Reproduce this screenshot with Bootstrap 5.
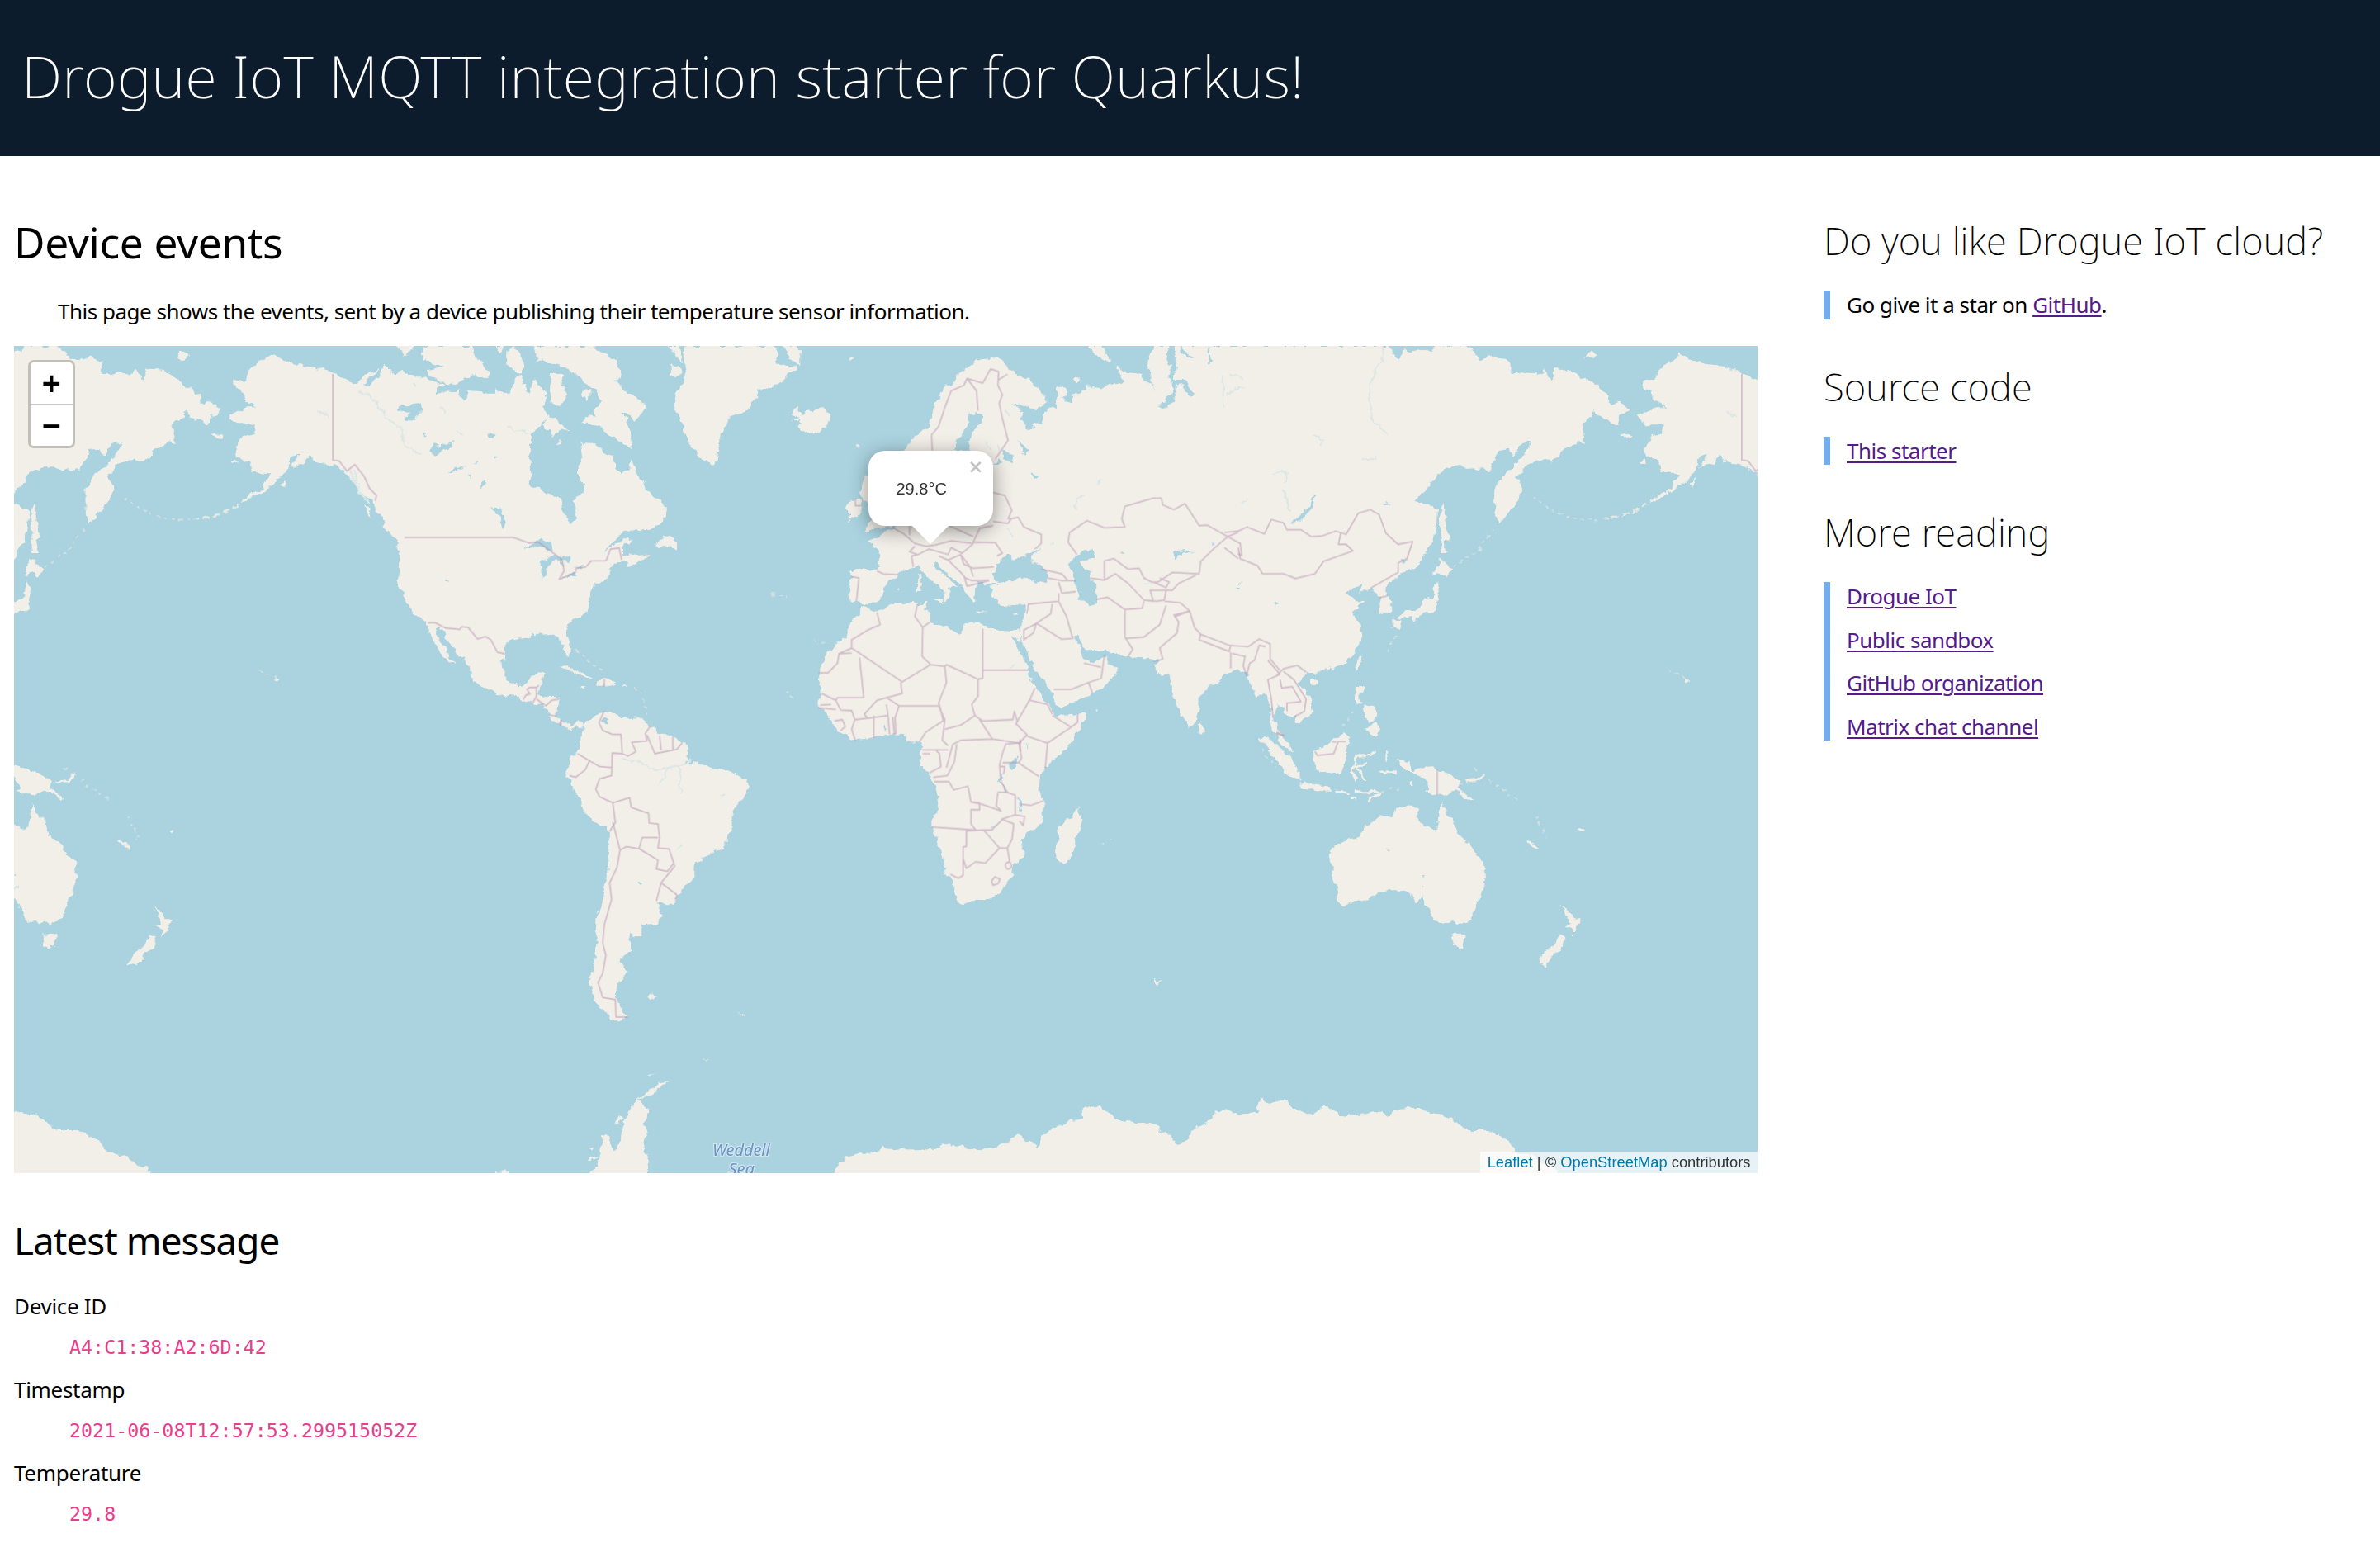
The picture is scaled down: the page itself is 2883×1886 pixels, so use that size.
<!DOCTYPE html>
<html lang="en">
<head>
<meta charset="utf-8">
<title>Drogue IoT MQTT integration starter for Quarkus!</title>
<link href="https://cdn.jsdelivr.net/npm/bootstrap@5.3.0/dist/css/bootstrap.min.css" rel="stylesheet">
<script src="https://cdn.jsdelivr.net/npm/bootstrap@5.3.0/dist/js/bootstrap.bundle.min.js"></script>
<style>
body{font:400 26px/36px "Noto Sans",sans-serif;letter-spacing:-.49px;color:#000;background:#fff;overflow-x:hidden}
.top-band{background:#0d1c2c;height:189px;padding:0 26px}
.top-band h1{font-size:70px;line-height:185px;font-weight:200;letter-spacing:.3px;color:#fff;margin:0}
.page-main{padding-left:17px;gap:80px}
.col-events{width:2112px;flex:none}
.col-events h2{font-size:51.4px;line-height:60px;font-weight:400;letter-spacing:-.35px;margin:74px 0 36px}
.intro{padding-left:53px;margin:0 0 24px}
.col-events h3{font-size:45.8px;line-height:54px;font-weight:400;letter-spacing:-.95px;margin:54px 0 35px}
.facts dt{font-weight:400;letter-spacing:-.3px;margin:0 0 13.5px}
.facts dd{margin:0 0 15.5px 67px;font:23.33px/36px "DejaVu Sans Mono",monospace;letter-spacing:0;color:#e83e8c}
.side-col{padding-top:74px}
.side-col h3{font-size:45.5px;line-height:56px;font-weight:200;letter-spacing:.08px;margin:0 0 33px}
.side-col ul{border-left:8px solid #73adf0;padding-left:20px;line-height:35px;gap:18px;margin:0 0 53px}
.side-col li{height:35px;margin-bottom:-.5px}
.side-col a{color:#551a8b;text-underline-offset:3px;text-decoration-thickness:1.5px}
.world{height:1002px;background:#aad3df;overflow:hidden}
.land{fill:#f2efe9}
.land .isl{stroke:#f2efe9;stroke-width:3;fill:none;stroke-linecap:round}
.land .dots{stroke:#cfe0e2;stroke-width:2;stroke-dasharray:4 5;fill:none}
.land .arc{stroke:#e3e8e3;stroke-width:2.5;stroke-dasharray:9 4;fill:none}
.lakes{fill:#aad3df}
.lakes .riv{fill:none;stroke:#dce7e6;stroke-width:2}
.bord path{fill:none;stroke:#b48dac;stroke-opacity:.5;stroke-width:1.8;stroke-linejoin:round}
.world path{vector-effect:non-scaling-stroke}
.sea-name{font:italic 20px "Noto Sans",sans-serif;fill:#6a93c6;stroke:#d3e6ee;stroke-width:2.5px;paint-order:stroke;letter-spacing:-.1px}
.zoomer{left:17px;top:17px;width:56.6px;border:3.3px solid rgba(0,0,0,.2);border-radius:7px;background-clip:padding-box;background-color:#fff}
.zoomer span{height:50px;font:700 36.67px/52px "DejaVu Sans Mono",monospace;letter-spacing:0;text-align:center;color:#000}
.zoomer span:first-child{border-bottom:1.4px solid #ccc;height:51px}
.bubble{left:1035px;top:127px;width:151px;height:91px;background:#fff;border-radius:20px;box-shadow:0 5px 23px rgba(0,0,0,.4);font:20px/24px "Liberation Sans",sans-serif;letter-spacing:0;color:#333;padding:34px 0 0 33.5px}
.bubble svg{left:52px;top:90px}
.bubble .shut{right:11.5px;top:5px;font:700 23px/28px "DejaVu Sans",sans-serif;color:#c3c3c3}
.credit{right:0;bottom:0;height:26px;background:rgba(255,255,255,.7);font:18.33px/26px "Liberation Sans",sans-serif;letter-spacing:0;color:#333;padding:0 8.5px}
.credit a{color:#0078a8;text-decoration:none}
</style>
</head>
<body>
<header class="top-band"><h1>Drogue IoT MQTT integration starter for Quarkus!</h1></header>
<div class="page-main d-flex align-items-start">
<main class="col-events">
<h2>Device events</h2>
<p class="intro">This page shows the events, sent by a device publishing their temperature sensor information.</p>
<div class="world position-relative">
<svg class="d-block" width="2112" height="1002" viewBox="17 419 2112 1002">
<defs>
<filter id="coast" filterUnits="userSpaceOnUse" x="0" y="400" width="2140" height="1030" color-interpolation-filters="sRGB"><feTurbulence type="fractalNoise" baseFrequency=".1" numOctaves="3" seed="4"/><feDisplacementMap in="SourceGraphic" scale="9" xChannelSelector="R" yChannelSelector="G"/></filter>
<g id="earth">
<g class="land">
<g transform="translate(0 410) scale(.4592 .33333)">
<path d="M717 60L735 72 762 82 795 100 830 105 860 118 880 128 905 140 935 163 960 140 985 120 1000 108 985 135 965 150 958 175 975 165 1000 140 1015 95 1040 130 1060 120 1090 128 1120 145 1150 160 1185 170 1150 180 1150 198 1185 200 1210 190 1220 225 1235 195 1280 200 1310 200 1400 200 1400 1085 1370 1085 1345 1100 1330 1125 1330 1145 1325 1180 1328 1215 1340 1245 1360 1262 1392 1255 1400 1225 1420 1213 1437 1218 1430 1245 1422 1265 1420 1298 1445 1300 1475 1305 1470 1335 1465 1370 1480 1390 1510 1400 1525 1390 1540 1405 1530 1420 1520 1405 1510 1412 1505 1425 1480 1405 1452 1385 1445 1355 1430 1335 1395 1322 1380 1312 1355 1292 1335 1300 1290 1278 1250 1248 1245 1210 1205 1140 1185 1100 1165 1055 1150 1050 1150 1075 1165 1110 1185 1150 1203 1190 1180 1165 1150 1120 1130 1060 1125 1030 1090 1000 1070 940 1052 895 1050 850 1055 780 1045 740 1010 685 1015 670 990 620 985 590 945 560 940 530 915 490 880 462 835 450 820 425 805 450 780 465 765 470 790 420 770 430 755 480 740 505 700 550 660 578 638 598 645 580 690 545 715 490 665 485 660 450 625 430 622 400 640 355 670 345 675 310 620 310 603 280 650 250 680 250 645 225 640 195 615 175 620 158 648 150 655 120 690 80z"/>
<path d="M1045 27L1090 27 1088 45 1065 65zM1120 27L1110 60 1115 75 1145 90 1175 100 1125 115 1130 130 1165 160 1200 165 1230 145 1265 135 1290 145 1290 120 1260 75 1250 27zM1308 27L1330 27 1318 52zM1350 30L1365 50 1385 110 1370 130 1345 100zM1410 27L1460 27 1520 110 1450 90 1415 65zM735 530L760 510 750 540zM960 605L972 615 980 655 968 635zM610 448l12-5 8 10-10 6zM560 343l20 5 12 12-10 3-20-12zM725 1232l10 10-8 10z"/>
<path class="arc" d="M630 600Q590 645 520 655"/>
<path class="dots" d="M520 655Q420 675 330 580M685 1205L725 1230"/>
</g>
<g transform="translate(600 410) scale(.38265 .33333)">
<path d="M0 180L20 200 50 195 60 150 80 130 100 190 112 200 125 145 140 170 160 215 155 250 165 280 145 320 110 345 100 370 70 400 58 460 65 485 80 500 90 535 130 540 160 565 210 580 215 630 240 673 255 650 245 590 280 560 285 530 260 490 265 460 275 430 268 380 320 385 345 420 370 430 375 470 400 495 420 480 432 440 445 480 470 525 475 550 520 590 540 610 540 655 490 695 410 698 370 740 350 775 380 745 420 722 435 730 400 755 400 785 430 790 490 780 470 800 420 832 415 810 400 808 360 840 360 870 315 895 295 940 295 990 250 1020 225 1055 225 1080 240 1130 235 1155 215 1130 205 1085 180 1073 120 1078 110 1090 60 1085 30 1110 22 1150 0 1150z"/>
<path d="M118 27L310 27 345 50 375 80 400 110 400 145 375 150 395 175 430 200 472 240 465 265 445 300 400 265 420 310 435 350 430 400 390 375 350 340 330 315 270 305 285 285 320 290 310 260 330 230 320 190 290 165 260 130 230 115 200 95 175 80 130 80 145 60zM40 50L60 30 80 60 95 95 85 125 60 115 40 95zM175 125L215 130 210 165 225 210 205 245 180 235 170 190zM165 270L190 290 235 340 205 330 180 360 175 330 155 330zM280 180l20 5 2 25-15 12-12-20zM195 380l15-12 8 5-18 15zM540 670L525 730 500 755 550 755 575 775 575 740 550 720 530 710zM188 1200L220 1188 265 1208 310 1237 275 1232 240 1205 205 1195zM325 1240L345 1237 385 1257 350 1265 320 1253zM262 1262l25 2-12 6zM400 1260l20 2-8 6z"/>
<path d="M600 27L880 27 900 60 885 95 930 95 960 100 905 160 845 190 832 180 825 215 790 270 740 285 725 330 710 380 700 440 690 460 645 430 615 380 590 320 570 260 568 200 590 165 605 130 595 60zM910 27L945 27 965 50 965 95 945 90 930 60zM545 27l40 0 5 60-25-35zM555 95l30 10 5 25-15 12-18-15z"/>
<path d="M935 275L960 250 970 275 985 262 1010 265 1035 248 1060 280 1060 305 1030 335 1000 350 965 335 955 315 970 300 935 300 960 290zM1140 580L1162 590 1158 640 1110 665 1125 640 1110 620 1115 600zM1165 490L1185 495 1220 640 1260 655 1260 685 1200 690 1168 700 1185 670 1200 655 1180 600 1155 560zM1143 385l8 0-4 15zM1120 72l15-6-8 12z"/>
<path class="dots" d="M875 930L925 940M1010 1105L1070 1100M920 1280L950 1310M440 1265Q480 1300 475 1370M255 1135L345 1215"/>
</g>
<g transform="translate(980 410) scale(.38265 .33333)">
<path d="M500 105L530 82 590 65 625 95 650 125 700 150 735 190 752 225 745 250 710 262 670 245 645 235 660 255 680 270 670 290 690 325 712 333 705 305 740 310 740 280 765 250 785 262 780 230 790 215 780 170 815 180 820 200 800 220 830 232 835 205 880 175 920 180 980 160 995 155 970 100 1000 125 1040 130 1090 185 1075 150 1085 130 1070 100 1080 50 1090 27 1568 27 1568 1190 1480 1330 1465 1350 1448 1285 1425 1300 1410 1290 1400 1240 1385 1225 1370 1200 1320 1215 1300 1240 1235 1300 1235 1350 1225 1390 1200 1412 1180 1375 1150 1290 1140 1210 1120 1225 1090 1190 1105 1175 1080 1160 1010 1155 950 1145 940 1130 905 1135 870 1120 850 1080 838 1080 838 1095 860 1125 870 1160 885 1175 920 1170 940 1150 945 1170 980 1200 950 1250 895 1290 800 1345 780 1340 775 1300 730 1225 690 1150 670 1090 665 1060 685 1000 687 965 640 975 600 965 580 930 570 890 530 885 525 965 500 930 480 890 430 850 395 795 410 790 395 830 430 865 470 905 445 905 445 945 430 965 435 925 380 870 345 820 310 845 285 845 275 870 240 900 235 930 215 955 175 975 160 955 130 955 125 915 135 870 130 845 150 835 215 840 225 800 215 760 185 740 225 715 260 700 310 640 303 400 330 360 380 320 400 230 440 170z"/>
<path d="M165 975L215 995 270 965 340 960 375 960 365 990 380 1000 385 1030 430 1045 480 1075 490 1040 515 1030 590 1060 640 1065 665 1060 668 1100 645 1080 690 1195 705 1250 740 1300 765 1340 785 1375 800 1372 875 1357 870 1385 830 1450 780 1510 750 1560 355 1560 352 1500 358 1470 310 1462 300 1440 265 1438 205 1452 145 1462 90 1420 60 1370 35 1340 27 1310 40 1270 30 1215 60 1140 115 1085 125 1040 160 1005z"/>
<path d="M878 27L930 27 950 75 945 88 920 75 900 50zM968 95l22 25-15-5zM838 148l10-16 12 10-8 22zM345 855L355 855 350 875 360 890 355 920 345 922zM395 945L430 945 425 965zM272 912l12-5-6 10zM530 988l30 5-20 3zM643 995l18-4-8 8zM1235 1388l20 40-15 14-10-5zM903 1348l12 0-6 4z"/>
</g>
<g transform="translate(1500 410) scale(.4209 .33333)">
<path d="M0 27L430 27 460 80 475 40 490 50 520 40 555 50 560 27 655 27 675 45 695 75 750 65 780 85 785 125 865 130 885 112 905 160 905 110 965 118 1010 155 1065 205 1070 240 1100 230 1125 260 1100 280 1090 320 1060 295 1020 265 1015 290 985 310 1000 380 975 375 940 405 900 450 880 437 830 455 800 500 820 550 800 595 770 640 750 678 737 620 737 550 755 510 820 430 840 378 820 380 790 430 780 400 750 405 725 475 690 480 640 465 590 475 540 550 507 590 545 605 572 625 570 680 560 740 520 820 485 850 470 850 445 880 420 910 440 960 440 990 405 1005 405 945 385 905 350 925 357 892 310 925 330 950 362 955 328 995 350 1040 357 1080 330 1150 300 1185 250 1205 220 1215 195 1215 175 1250 210 1310 213 1360 170 1402 165 1375 145 1375 130 1340 110 1335 105 1365 100 1390 125 1435 150 1480 160 1510 120 1475 110 1430 90 1400 95 1350 75 1285 50 1300 40 1250 20 1215 0 1210z"/>
<path d="M590 600L597 660 607 725 590 740 600 780 583 780 582 700 578 640zM580 800L618 838 600 865 580 850 560 865zM570 880L582 915 565 990 530 1000 510 1020 490 1015 455 1015 480 990 515 990 530 960 560 935zM445 1025L468 1020 460 1060 445 1045zM345 1160L356 1155 347 1205 337 1190zM210 1240l18-6 5 8-14 22-12-8zM340 1260L360 1260 350 1300 355 1330 337 1310zM400 1390L408 1420 395 1445 365 1425zM365 1330l25 10 8 40-25 15-10-30zM995 70L1015 45 1038 60 1020 75zM1105 345l28 12-12 0z"/>
<path class="dots" d="M620 830L690 770 740 680M430 1140L460 1070M300 1410L335 1350"/>
</g>
<g transform="translate(600 850) scale(.38265 .3655)">
<path d="M275 95L290 60 345 30 370 40 400 52 470 55 490 80 525 108 560 112 600 135 615 175 600 205 640 198 690 222 740 228 780 255 797 258 800 300 750 362 748 420 720 490 680 498 632 535 630 575 575 650 560 672 510 662 530 705 510 735 462 740 460 775 428 772 425 820 397 860 417 890 378 950 380 985 420 1045 380 1060 320 1005 298 930 315 860 320 720 345 640 360 500 360 430 290 375 245 280 228 250 235 190 270 150zM478 982l20-12 18 3-25 15zM768 1028l18 8 2 10zM655 1182l25 5-10 1z"/>
<path d="M300 1565L325 1530 330 1490 340 1440 360 1440 375 1485 400 1455 405 1390 450 1320 485 1350 470 1390 478 1440 468 1465 482 1510 485 1580 300 1580zM445 1322L520 1262 548 1256 480 1308zM475 1245l40-22-30 22zM380 1395l10-28 14 8-16 22zM295 1478l14 2-6 10zM290 1520l38-15-30 22zM0 1557L30 1555 50 1567 0 1567z"/>
</g>
<g transform="translate(960 850) scale(.38265 .3655)">
<path d="M400 60L900 60 925 35 925 55 880 145 835 180 805 215 785 240 780 290 795 330 797 385 785 405 750 430 725 455 732 515 698 540 695 575 660 630 625 655 570 660 538 672 520 660 515 625 485 565 470 490 440 420 440 395 465 340 455 290 440 250 405 205 412 150 400 130zM905 348L917 395 900 450 880 520 855 535 837 525 830 485 845 450 838 415 860 395 885 385zM1145 918l10 8 12-4-8 15-14-2zM976 468l10 2-5 5zM1004 457l6 0-3 6z"/>
<path d="M130 1565L145 1530 190 1500 270 1492 285 1465 300 1485 460 1482 475 1462 540 1475 595 1490 650 1475 710 1435 765 1470 775 1480 790 1440 830 1410 915 1380 920 1350 960 1338 1000 1360 1030 1385 1155 1405 1165 1430 1195 1430 1215 1470 1260 1445 1265 1420 1300 1400 1340 1365 1365 1352 1400 1370 1470 1360 1485 1310 1500 1330 1568 1340 1568 1580 130 1580z"/>
</g>
<g transform="translate(1480 850) scale(.4209 .3655)">
<path d="M0 1355L40 1370 100 1360 115 1310 130 1335 170 1325 190 1320 200 1345 260 1370 280 1345 300 1337 350 1375 400 1365 450 1355 485 1378 497 1350 550 1345 650 1375 700 1420 760 1420 825 1455 845 1490 900 1505 925 1530 960 1540 972 1580 0 1580z"/>
<path d="M315 490L345 465 395 450 410 410 430 405 460 373 490 385 500 352 525 345 570 350 555 385 590 415 615 422 628 370 635 330 650 380 665 385 680 440 705 460 725 495 755 530 760 580 745 640 725 690 718 718 680 738 665 725 650 737 610 720 600 685 590 680 580 640 555 672 540 632 510 622 450 632 420 657 385 660 350 677 328 660 335 630 320 570 310 520zM660 770L700 772 695 810 680 820 668 805zM978 668L1000 700 1012 720 1038 720 1025 745 1005 783 1005 755 990 745 1002 735zM970 770L990 778 975 825 955 835 935 877 907 865 930 830 955 810zM1028 422l8-5 8 7-8 8z"/>
<path d="M105 118L130 122 200 185 222 235 222 265 190 245 150 180zM222 268L300 280 318 298 280 295 230 285zM350 100L370 120 355 150 362 180 340 240 280 230 262 190 262 165 290 155 320 130zM505 195L540 200 545 235 560 228 582 210 620 225 655 240 690 268 680 285 725 325 700 320 675 290 640 308 620 308 585 295 600 285 580 250 550 240 525 225zM435 75l15-8 5 25-10 20-18-15-18-5z"/>
<path class="isl" d="M440 172L425 182 388 184 378 215 381 258M385 215L415 203M392 220L410 255M330 299L365 302M385 300L455 300M422 325L455 306M705 265L735 262 750 242M455 232L500 232M475 165L472 190M882 462L910 487M375 316L388 320M545 262L545 275"/>
<path class="dots" d="M770 262L855 330M905 380L935 450M725 222L750 240M115 155L160 230M460 298L515 285"/>
</g>
</g>
<g class="lakes">
<g transform="translate(0 410) scale(.4592 .33333)">
<path d="M1045 262L1065 242 1112 232 1115 262 1085 300 1065 295 1080 270zM1130 408L1145 375 1160 395 1200 368 1185 400 1150 428zM1180 490L1200 470 1235 470 1205 480zM1297 615L1318 615 1337 665 1325 695 1318 650zM1385 772L1405 745 1425 730 1455 745 1458 772 1415 760zM1428 870L1427 820 1445 790 1500 790 1505 815 1480 800 1485 840 1472 800 1445 820 1442 860zM1480 875L1510 850 1518 858zM1515 835L1545 825 1538 838zM1270 520l10-12 0 25-10 15zM1240 510l-5-18 8 8zM1172 875l6 15-6-2zM1290 350l18-5-8 25-12-5zM1250 450l8-15 0 20zM1115 350l8 6-8 2zM1305 430l6 10-8 2z"/>
<path class="riv" d="M945 195L985 215 1005 265 1030 298 1060 330 1068 390 1110 420M840 262L870 288M1340 322L1395 345M925 480L950 560 975 600M935 475L945 530M1095 160L1100 180M1165 250L1175 270M1205 330L1225 350"/>
</g>
<g transform="translate(980 410) scale(.38265 .33333)">
<path d="M455 407L480 350 505 310 505 280 530 270 552 280 545 310 510 345 505 370 512 407zM580 455L600 442 612 456zM612 405L645 420 645 450 615 440zM668 370L690 405 690 425 672 415zM585 860L595 820 630 780 650 800 690 785 730 765 700 805 750 845 757 880 720 887 670 868 620 885 590 880zM845 785L880 768 902 775 895 800 865 800 860 820 890 850 890 880 910 890 910 960 885 967 850 945 850 890 830 850 822 815zM1145 27L1158 27 1157 100 1152 150 1190 150 1215 208 1200 205 1180 165 1163 170 1160 210 1140 252 1100 240 1130 235 1145 200 1155 180 1140 140 1148 100 1133 60zM1175 27L1195 55 1215 65 1195 70 1178 50zM1265 27L1275 90 1265 95zM1155 800L1155 778 1225 772 1170 785 1160 802zM705 485l18 12-8 8zM565 888l35 2-5 8-30 0zM1270 740l15 5-5 8zM985 775l15 5-10 3zM1480 955l10 8-8 5zM1345 908l25 2-5 5zM1355 890l20 0-12 5z"/>
<path class="riv" d="M845 620L845 585 870 570M910 535L925 515M765 755L775 740M1310 140L1315 245M1325 205L1350 180 1380 178M1335 130L1375 150M630 1205L650 1180M1475 490L1500 485 1515 510M1500 555L1525 625M620 260L635 280M595 380L605 410M560 380L570 410M1060 885L1085 890M1370 605L1385 575M630 690L650 720"/>
</g>
<g transform="translate(1500 410) scale(.4209 .33333)">
<path d="M216 568L222 570 215 610 180 660 153 667 185 635 205 605zM105 960l12 0 0 6zM468 805l12 0-5 12zM420 600l14-4-8 10z"/>
<path class="riv" d="M415 27L420 85 400 100 375 180 385 290 432 350M215 348L245 370 236 392M100 490L140 490 135 520M130 555L150 625M355 440L395 430"/>
</g>
<g transform="translate(600 850) scale(.38265 .3655)">
<path d="M340 55L352 55 350 70 342 68zM450 602l12 4-4 6-8-2zM368 392l12 12-2 6z"/>
<path class="riv" d="M400 190L460 200 500 228 550 218 600 205 620 190M550 218L515 275M583 210L585 305M575 490L590 475M710 318L728 310"/>
</g>
<g transform="translate(960 850) scale(.38265 .3655)"><path d="M688 195L712 187 712 215 695 225 685 215zM655 235L660 235 662 275 678 300 670 298 656 265zM712 315L720 320 722 350 732 375 718 360zM735 135l10 20-5-3zM630 418l20-14-15 17zM292 75l4 25-8-18z"/></g>
<g transform="translate(1480 850) scale(.4209 .3655)"><path d="M475 488l10-3 0 6zM572 575l10 0 0 6zM580 612l6 0 0 6z"/></g>
</g>
</g>
<g id="frontiers" class="bord">
<g transform="translate(0 410) scale(.4592 .33333)"><path d="M878 128L878 442 895 445 915 482 936 458 960 500 975 545 993 570 990 590M1067 723L1355 723 1395 743 1420 740 1460 780 1483 805 1488 845 1475 875 1518 850 1520 835 1545 830 1560 808 1568 808M1128 1033L1148 1033 1175 1052 1213 1057 1218 1047 1235 1050 1260 1092 1280 1083 1295 1095 1312 1140 1330 1145M1380 1312L1388 1295 1398 1292 1390 1275 1397 1268 1415 1268 1422 1260M1415 1268L1415 1300 1405 1325M1415 1310L1440 1335 1455 1315 1475 1310M1450 1368L1468 1372M1480 1385L1480 1405"/></g>
<g transform="translate(600 410) scale(.38265 .33333)"><path d="M313 808L350 808 365 765 392 762 400 805M345 1238L345 1265M1140 582L1140 608 1158 608"/></g>
<g transform="translate(980 410) scale(.38265 .33333)">
<path d="M390 407L388 350 410 320 430 250 450 190 490 170 500 145 550 162 575 110 600 120 598 170 612 205 602 235 612 290 630 370 590 438M500 145L530 190 535 262M600 150L628 130M583 560L620 570 642 625 630 655 640 655 630 672 583 665M640 655L662 650 680 685 735 712 735 745 715 765M583 680L540 690 520 740 590 742 612 780 595 790M445 681L520 720M262 685L300 710 335 745 370 755 400 750 450 735 520 745M318 680L318 715M215 845L235 855 280 858M135 865L158 870 150 955M330 830L325 790 345 785 318 775 335 755M345 785L380 765 440 785 450 760 485 780 520 745M410 790L440 805 480 785 490 820 520 835 585 830M440 805L480 850 495 870 515 880 570 878M490 860L500 900 570 880M480 785L510 830 520 865M735 838L800 855 820 880 800 880 755 870M820 880L845 880M790 885L800 925 845 920M790 925L790 955 695 965 690 1000M790 955L815 1010 835 1090 800 1093 720 1035 765 1000 770 965M720 1035L680 1060 680 1095 710 1070 720 1035M775 1275L830 1275 885 1250 925 1235 935 1150M885 1250L897 1288M870 1180L925 1195"/>
<path d="M848 785L820 740 825 705 880 662 935 688 1000 685 990 655 1000 610 1090 580 1115 580 1120 605 1155 622 1190 600 1235 680 1260 678 1325 720 1280 765 1240 810 1235 855 1150 850 1105 885 1085 885 1060 870 1045 835 1010 838 965 800 935 808 935 878 890 870M935 878L970 855 1010 890 1060 950 1090 955 1080 915 1150 915 1170 890 1225 860M1090 885L1130 905 1140 885 1110 870M1060 950L1100 955 1125 950 1130 915M910 948L945 940 1000 985 1055 980 1060 955M1125 955L1175 960 1205 990 1160 1010M1000 985L1000 1085 1025 1130 1010 1155M1000 1090L1060 1085 1110 1040 1130 970M1090 1175L1120 1165 1110 1125 1165 1070 1170 1030 1155 1005 1205 990 1220 1050 1240 1075 1330 1115 1390 1120 1425 1092 1440 1100 1460 1110 1460 1165 1490 1205M1240 1075L1235 1095 1330 1137 1335 1115M1335 1140L1335 1200M1340 1145L1380 1155 1375 1190 1385 1225 1395 1180 1410 1170 1425 1115 1445 1120M1325 720L1359 704M1325 720L1365 745 1370 790 1359 781"/>
<path d="M215 995L225 1040 185 1060 135 1095 135 1125 95 1145 90 1180 60 1215 30 1215M95 1145L135 1143M135 1125L295 1248 385 1185 358 1155 360 1050 335 1010 343 965M360 1050L383 1030M160 1160L173 1305 90 1305 85 1315 40 1290M385 1185L430 1192 435 1185 535 1238 550 1235 550 1055M550 1205L697 1205M535 1238L535 1300 515 1330 525 1370 550 1390 645 1385 650 1355 660 1395M430 1192L435 1250 410 1325 415 1340M290 1250L295 1290 245 1305 285 1335 410 1335 430 1385 370 1430 350 1465M245 1305L215 1315 175 1365 185 1380 250 1370 245 1330M85 1315L100 1350 135 1352 145 1385 185 1380M35 1332L70 1330M30 1342L85 1348M145 1385L135 1420 147 1462M80 1390L105 1385 115 1410 100 1425M205 1370L205 1452M250 1370L255 1438M265 1375L270 1438M285 1335L272 1380 275 1438M525 1370L480 1405 430 1420M430 1385L422 1460 440 1480M540 1385L580 1455 480 1460 455 1475 435 1560M580 1455L665 1470 690 1440 655 1400 700 1310 715 1270M700 1315L755 1330 770 1365M770 1370L830 1412 850 1395 850 1365M830 1412L755 1470 690 1445M755 1470L748 1560M665 1470L670 1500M415 1340L425 1390M358 1495L440 1495"/>
</g>
<g transform="translate(1500 410) scale(.4209 .33333)"><path d="M-40 760L0 800M-40 705L0 700 25 685 75 710 95 658 130 670 140 695 180 695 210 720 240 718 280 700 310 712 345 635 380 622 405 640 425 708 460 748 502 738 485 800 460 815 460 850 425 875 380 908M295 705L288 748 310 748 330 772 245 810 220 855 165 872 130 855 70 855 55 825 5 800 0 760M405 942L430 935M110 1225L130 1200 170 1188 195 1212M130 1210L160 1240 195 1310 190 1355 160 1375M120 1240L125 1270 155 1265 180 1320 140 1325 140 1355M110 1430L130 1443M85 1170L120 1220 85 1240 95 1310 100 1380"/></g>
<g transform="translate(600 850) scale(.38265 .3655)"><path d="M345 30L328 70 340 95 370 108 398 108 402 172 370 170 368 245 330 255 318 290 330 315 372 335 425 318 430 350 485 370 487 402 515 405 520 450 515 485 550 488 568 545 525 600 510 660M402 172L420 180 445 165 432 135 480 130 475 105 490 82M480 110L505 172 575 158 592 135M520 112L525 160M562 115L562 158M260 172L330 215 370 218M300 192L285 225 255 250 235 245M372 335L380 400 362 430M372 400L395 492 415 480 455 487 465 450 515 450M455 487L515 525 510 555 545 562 565 535M525 600L575 640 570 655M395 492L385 550 362 600 368 655 345 740 340 800 350 840 340 900 325 930 340 980 380 987 382 1045 420 1045M205 65L205 78"/></g>
<g transform="translate(960 850) scale(.38265 .3655)"><path d="M412 172L435 172M455 162L465 172 470 215 435 235M520 140L512 200 490 245 445 250M448 265L495 265 510 292 555 280 565 332 592 335 592 358 565 358 565 405 580 425 440 415M565 332L600 340 660 362 645 345 650 300 680 300M550 428L605 425 655 485 610 535 580 530 550 552 540 520M550 428L550 480 540 480 540 575 525 585 500 572M605 425L630 425 665 390 700 405 695 455 680 485 655 485M680 485L688 535M660 390L705 375 735 380 730 410 718 395M705 375L705 310 680 300 660 265 655 210 665 170 675 140 725 135M665 202L715 202 780 248M720 125L720 160 725 185 715 205M722 340L755 343 795 328M675 538a9 11 0 1 0 17 10 9 11 0 1 0-17-10M630 595L640 580 657 588 650 603 635 608zM655 215L672 215 668 240"/></g>
<g transform="translate(1480 850) scale(.4209 .3655)"><path d="M620 225L620 308M268 165L275 178 322 172 335 132 357 132M318 133L330 133M158 105L180 113"/></g>
</g>
</defs>
<g filter="url(#coast)"><use href="#earth"/><use href="#earth" x="-1706.67"/><use href="#earth" x="1706.67"/></g>
<use href="#frontiers"/><use href="#frontiers" x="1706.67"/>
<text class="sea-name" x="863" y="1399.500">Weddell</text><text class="sea-name" x="882.500" y="1423">Sea</text>
</svg>
<div class="zoomer position-absolute d-flex flex-column"><span>+</span><span>−</span></div>
<div class="bubble position-absolute">29.8°C
<span class="shut position-absolute">×</span>
<svg class="position-absolute" width="46" height="24" viewBox="0 0 46 24"><path d="M0 0H46L23 23z" fill="#fff"/></svg>
</div>
<div class="credit position-absolute text-nowrap"><a href="#">Leaflet</a> | © <a href="#">OpenStreetMap</a> contributors</div>
</div>
<h3>Latest message</h3>
<dl class="facts m-0">
<dt>Device ID</dt><dd>A4:C1:38:A2:6D:42</dd>
<dt>Timestamp</dt><dd>2021-06-08T12:57:53.299515052Z</dd>
<dt>Temperature</dt><dd>29.8</dd>
</dl>
</main>
<aside class="side-col">
<h3>Do you like Drogue IoT cloud?</h3>
<ul class="list-unstyled d-flex flex-column"><li>Go give it a star on <a href="#">GitHub</a>.</li></ul>
<h3>Source code</h3>
<ul class="list-unstyled d-flex flex-column"><li><a href="#">This starter</a></li></ul>
<h3>More reading</h3>
<ul class="list-unstyled d-flex flex-column"><li><a href="#">Drogue IoT</a></li><li><a href="#">Public sandbox</a></li><li><a href="#">GitHub organization</a></li><li><a href="#">Matrix chat channel</a></li></ul>
</aside>
</div>
</body>
</html>
